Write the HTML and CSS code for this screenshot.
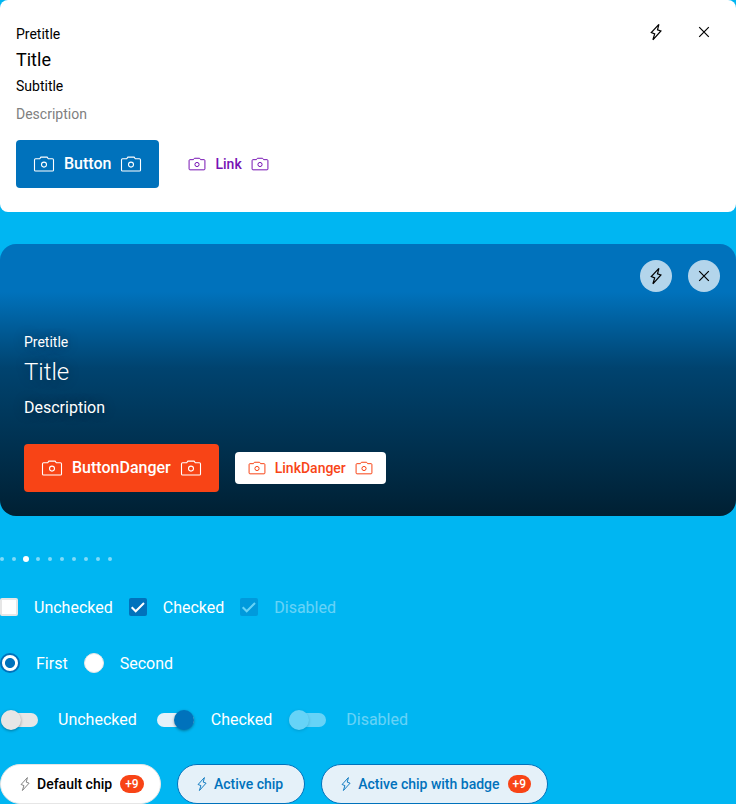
FILE: index.html
```html
<!DOCTYPE html>
<html lang="en">
<head>
<meta charset="utf-8">
<title>UI kit</title>
<link rel="stylesheet" href="styles.css">
</head>
<body>
<svg class="sprite" aria-hidden="true">
  <symbol id="camera" viewBox="0 0 24 24"><path d="M3.600 6.800h4.100l1.200-1.700h6.200l1.200 1.700h4.100q1.100 0 1.100 1.100v10q0 1.100-1.100 1.100H3.600q-1.100 0-1.100-1.100v-10q0-1.100 1.100-1.100z"/><circle cx="12" cy="12.600" r="2.500"/></symbol>
  <symbol id="bolt" viewBox="0 0 24 24"><path d="M14.900 4.300 7.300 12.600l3.400 1.300-1.800 5.900 8-8.800-3.400-1.200z"/></symbol>
  <symbol id="close" viewBox="0 0 24 24"><path d="m7.200 7.200 9.600 9.600m0-9.600-9.600 9.600"/></symbol>
  <symbol id="check" viewBox="0 0 18 18"><path d="m2.700 9.300 4 4 8.300-8.300"/></symbol>
</svg>
<section class="card">
  <div class="actions">
    <button class="round"><svg><use href="#bolt"/></svg></button>
    <button class="round"><svg><use href="#close"/></svg></button>
  </div>
  <div class="card-pre">Pretitle</div>
  <div class="card-title">Title</div>
  <div class="card-sub">Subtitle</div>
  <div class="card-desc">Description</div>
  <div class="buttons">
    <button class="btn primary"><svg><use href="#camera"/></svg><span>Button</span><svg><use href="#camera"/></svg></button>
    <button class="btn small link"><svg><use href="#camera"/></svg><span>Link</span><svg><use href="#camera"/></svg></button>
  </div>
</section>
<section class="banner">
  <div class="actions">
    <button class="round filled"><svg><use href="#bolt"/></svg></button>
    <button class="round filled"><svg><use href="#close"/></svg></button>
  </div>
  <div class="banner-pre">Pretitle</div>
  <div class="banner-title">Title</div>
  <div class="banner-desc">Description</div>
  <div class="buttons">
    <button class="btn danger"><svg><use href="#camera"/></svg><span>ButtonDanger</span><svg><use href="#camera"/></svg></button>
    <button class="btn small link-danger"><svg><use href="#camera"/></svg><span>LinkDanger</span><svg><use href="#camera"/></svg></button>
  </div>
</section>
<div class="dots"><i></i><i></i><i class="current"></i><i></i><i></i><i></i><i></i><i></i><i></i><i></i></div>
<div class="row checks">
  <label><span class="box"></span>Unchecked</label>
  <label><span class="box on"><svg><use href="#check"/></svg></span>Checked</label>
  <label class="disabled"><span class="box on"><svg><use href="#check"/></svg></span>Disabled</label>
</div>
<div class="row radios">
  <label><span class="radio on"></span>First</label>
  <label><span class="radio"></span>Second</label>
</div>
<div class="row switches">
  <label><span class="switch"></span>Unchecked</label>
  <label><span class="switch on"></span>Checked</label>
  <label class="disabled"><span class="switch"></span>Disabled</label>
</div>
<div class="chips">
  <span class="chip"><svg><use href="#bolt"/></svg>Default chip<b>+9</b></span>
  <span class="chip active plain"><svg><use href="#bolt"/></svg>Active chip</span>
  <span class="chip active"><svg><use href="#bolt"/></svg>Active chip with badge<b>+9</b></span>
</div>
</body>
</html>
```
FILE: styles.css
```css
* { box-sizing: border-box; }
body {
  margin: 0;
  height: 804px;
  overflow: hidden;
  background: #00b6f2;
  font-family: Roboto, sans-serif;
  font-size: 16px;
}
button { font: inherit; border: 0; margin: 0; }
svg { fill: none; stroke: currentColor; stroke-width: 1.2; flex: none; }
.sprite { display: none; }

.card, .banner { position: relative; }
.card { height: 212px; padding: 24px 16px 0; border-radius: 8px; background: #fff; color: #000; }
.actions { position: absolute; top: 16px; right: 16px; display: flex; gap: 16px; }
.round { width: 32px; height: 32px; padding: 4px; border-radius: 50%; background: none; color: #000; }
.round svg { display: block; width: 24px; height: 24px; }
.round.filled { background: rgba(255, 255, 255, .7); }
.card-pre, .card-sub, .card-desc { font-size: 14px; line-height: 20px; }
.card-title { font-size: 18px; line-height: 24px; margin: 4px 0; }
.card-desc { color: #808080; margin: 8px 0 16px; }

.buttons { display: flex; align-items: center; gap: 16px; }
.btn {
  display: flex;
  align-items: center;
  gap: 8px;
  height: 48px;
  padding: 0 16px;
  border-radius: 4px;
  font-weight: 500;
  line-height: 24px;
  color: #fff;
}
.btn svg { width: 24px; height: 24px; stroke-width: 1.1; }
.btn.small { height: 32px; padding: 0 12px; font-size: 14px; line-height: 20px; }
.btn.small svg { width: 20px; height: 20px; stroke-width: 1.2; }
.primary { background: #0072bc; }
.btn.link { background: none; color: #7713b4; }
.danger { background: #f84416; }
.btn.link-danger { background: #fff; color: #f84416; }

.banner {
  height: 272px;
  margin-top: 32px;
  padding: 88px 24px 0;
  border-radius: 16px;
  background: linear-gradient(#0072bc 0, #0072bc 48px, #00436f 124px, #002033 100%);
  color: #fff;
  text-shadow: 0 0 12px rgba(0, 0, 0, .4);
}
.banner .btn { text-shadow: none; }
.banner-pre { font-size: 14px; line-height: 20px; }
.banner-title { font-size: 24px; line-height: 32px; font-weight: 300; margin: 4px 0 8px; }
.banner-desc { line-height: 24px; margin-bottom: 24px; }

.dots { display: flex; align-items: center; gap: 8px; height: 6px; margin-top: 40px; }
.dots i { width: 4px; height: 4px; border-radius: 50%; background: rgba(255, 255, 255, .5); }
.dots .current { width: 6px; height: 6px; margin: 0 -1px; background: #fff; }

.row, .row label { display: flex; align-items: center; }
.row { height: 24px; gap: 16px; color: #fff; }
.row label { gap: 16px; }
.disabled { opacity: .4; }
.checks { margin-top: 33px; }
.box { width: 18px; height: 18px; border: 2px solid #e6e6e6; border-radius: 2px; background: #fff; }
.box.on { border: 0; background: #0072bc; }
.box svg { display: block; width: 18px; height: 18px; stroke-width: 2; }
.radios { margin-top: 32px; }
.radio { width: 20px; height: 20px; border: 1px solid #e6e6e6; border-radius: 50%; background: #fff; }
.radio.on { border: 2px solid #0072bc; background: radial-gradient(circle, #0072bc 4.6px, #fff 5.4px); }
.switches { margin-top: 32px; }
.switch { position: relative; width: 37px; height: 14px; margin: 2px 4px 0 1px; border-radius: 7px; background: #e6e6e6; }
.switch::before {
  content: "";
  position: absolute;
  top: -3px;
  left: 0;
  width: 20px;
  height: 20px;
  border-radius: 50%;
  background: #e6e6e6;
  box-shadow: 0 1px 3px rgba(0, 0, 0, .35);
}
.switch.on { margin: 2px 1px 0 4px; background: #e5f1f9; }
.switch.on::before { left: auto; right: 0; background: #0072bc; }
.disabled .switch, .disabled .switch::before { background: #fff; }

.chips { display: flex; gap: 16px; margin-top: 33px; }
.chip {
  display: flex;
  align-items: center;
  height: 40px;
  padding: 0 16px 0 14px;
  border: 1px solid #e6e6e6;
  border-radius: 20px;
  background: #fff;
  font-size: 14px;
  font-weight: 500;
}
.chip svg { width: 20px; height: 20px; margin-right: 2px; stroke-width: 1.1; color: #777; }
.chip b {
  height: 18px;
  margin-left: 8px;
  padding: 0 5px;
  border-radius: 9px;
  background: #f84416;
  color: #fff;
  font-size: 12px;
  font-weight: 500;
  line-height: 18px;
}
.chip.active { border-color: #0072bc; background: #e5f1f9; color: #0072bc; }
.chip.active svg { color: #0072bc; }
.chip.plain { margin-left: .4px; padding-right: 21px; }
```
